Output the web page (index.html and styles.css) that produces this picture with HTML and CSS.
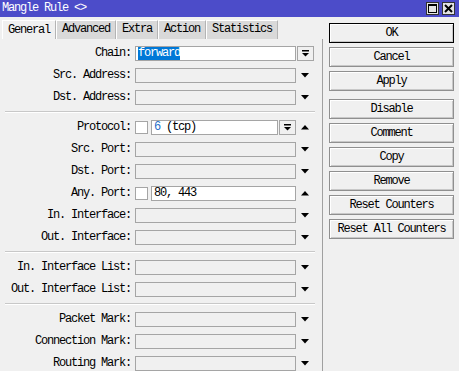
FILE: index.html
```html
<!DOCTYPE html>
<html lang="en">
<head>
    <meta charset="UTF-8">
    <title>Mangle Rule</title>
    <link rel="stylesheet" href="styles.css">
</head>
<body>
<div class="titlebar">
    <span class="title">Mangle Rule &lt;&gt;</span>
    <div class="wbtns">
        <div class="wbtn"><svg width="9" height="9" viewBox="0 0 9 9"><rect x="0.5" y="0.5" width="8" height="8" fill="none" stroke="#000"/><rect x="0" y="0" width="9" height="2" fill="#000"/></svg></div>
        <div class="wbtn"><svg width="9" height="9" viewBox="0 0 9 9"><path d="M1 1L8 8M8 1L1 8" stroke="#000" stroke-width="2"/></svg></div>
    </div>
</div>

<div class="main">
    <div class="left">
        <div class="tabs">
            <div class="tab active">General</div>
            <div class="tab">Advanced</div>
            <div class="tab">Extra</div>
            <div class="tab">Action</div>
            <div class="tab">Statistics</div>
        </div>
        <div class="panel">
            <div class="row">
                <div class="label">Chain:</div>
                <div class="field">
                    <div class="input white"><span class="sel">forward</span></div>
                </div>
                <div class="ctl"><div class="dropbtn"><svg width="7" height="7" viewBox="0 0 7 7"><rect x="0" y="0" width="7" height="1.5" fill="#000"/><polygon points="0,3 7,3 3.5,6.5" fill="#000"/></svg></div></div>
            </div>
            <div class="row">
                <div class="label">Src. Address:</div>
                <div class="field"><div class="input"></div></div>
                <div class="ctl"><svg class="arrow" width="8" height="5" viewBox="0 0 8 5"><polygon points="0,0 8,0 4,4.5" fill="#000"/></svg></div>
            </div>
            <div class="row">
                <div class="label">Dst. Address:</div>
                <div class="field"><div class="input"></div></div>
                <div class="ctl"><svg class="arrow" width="8" height="5" viewBox="0 0 8 5"><polygon points="0,0 8,0 4,4.5" fill="#000"/></svg></div>
            </div>

            <div class="sep"></div>

            <div class="row">
                <div class="label">Protocol:</div>
                <div class="field">
                    <div class="check"></div>
                    <div class="input white"><span class="num">6</span>&nbsp;(tcp)</div>
                    <div class="dropbtn"><svg width="7" height="7" viewBox="0 0 7 7"><rect x="0" y="0" width="7" height="1.5" fill="#000"/><polygon points="0,3 7,3 3.5,6.5" fill="#000"/></svg></div>
                </div>
                <div class="ctl"><svg class="arrow" width="8" height="5" viewBox="0 0 8 5"><polygon points="0,4.5 8,4.5 4,0" fill="#000"/></svg></div>
            </div>
            <div class="row">
                <div class="label">Src. Port:</div>
                <div class="field"><div class="input"></div></div>
                <div class="ctl"><svg class="arrow" width="8" height="5" viewBox="0 0 8 5"><polygon points="0,0 8,0 4,4.5" fill="#000"/></svg></div>
            </div>
            <div class="row">
                <div class="label">Dst. Port:</div>
                <div class="field"><div class="input"></div></div>
                <div class="ctl"><svg class="arrow" width="8" height="5" viewBox="0 0 8 5"><polygon points="0,0 8,0 4,4.5" fill="#000"/></svg></div>
            </div>
            <div class="row">
                <div class="label">Any. Port:</div>
                <div class="field">
                    <div class="check"></div>
                    <div class="input white">80, 443</div>
                </div>
                <div class="ctl"><svg class="arrow" width="8" height="5" viewBox="0 0 8 5"><polygon points="0,4.5 8,4.5 4,0" fill="#000"/></svg></div>
            </div>
            <div class="row">
                <div class="label">In. Interface:</div>
                <div class="field"><div class="input"></div></div>
                <div class="ctl"><svg class="arrow" width="8" height="5" viewBox="0 0 8 5"><polygon points="0,0 8,0 4,4.5" fill="#000"/></svg></div>
            </div>
            <div class="row">
                <div class="label">Out. Interface:</div>
                <div class="field"><div class="input"></div></div>
                <div class="ctl"><svg class="arrow" width="8" height="5" viewBox="0 0 8 5"><polygon points="0,0 8,0 4,4.5" fill="#000"/></svg></div>
            </div>

            <div class="sep"></div>

            <div class="row">
                <div class="label">In. Interface List:</div>
                <div class="field"><div class="input"></div></div>
                <div class="ctl"><svg class="arrow" width="8" height="5" viewBox="0 0 8 5"><polygon points="0,0 8,0 4,4.5" fill="#000"/></svg></div>
            </div>
            <div class="row">
                <div class="label">Out. Interface List:</div>
                <div class="field"><div class="input"></div></div>
                <div class="ctl"><svg class="arrow" width="8" height="5" viewBox="0 0 8 5"><polygon points="0,0 8,0 4,4.5" fill="#000"/></svg></div>
            </div>

            <div class="sep"></div>

            <div class="row">
                <div class="label">Packet Mark:</div>
                <div class="field"><div class="input"></div></div>
                <div class="ctl"><svg class="arrow" width="8" height="5" viewBox="0 0 8 5"><polygon points="0,0 8,0 4,4.5" fill="#000"/></svg></div>
            </div>
            <div class="row">
                <div class="label">Connection Mark:</div>
                <div class="field"><div class="input"></div></div>
                <div class="ctl"><svg class="arrow" width="8" height="5" viewBox="0 0 8 5"><polygon points="0,0 8,0 4,4.5" fill="#000"/></svg></div>
            </div>
            <div class="row">
                <div class="label">Routing Mark:</div>
                <div class="field"><div class="input"></div></div>
                <div class="ctl"><svg class="arrow" width="8" height="5" viewBox="0 0 8 5"><polygon points="0,0 8,0 4,4.5" fill="#000"/></svg></div>
            </div>
        </div>
    </div>

    <div class="actions">
        <div class="btn default">OK</div>
        <div class="btn">Cancel</div>
        <div class="btn">Apply</div>
        <div class="btn spaced">Disable</div>
        <div class="btn">Comment</div>
        <div class="btn">Copy</div>
        <div class="btn">Remove</div>
        <div class="btn">Reset Counters</div>
        <div class="btn">Reset All Counters</div>
    </div>
</div>
</body>
</html>
```

FILE: styles.css
```css
body {
    margin: 0;
    width: 459px;
    height: 371px;
    overflow: hidden;
    background: #f0f0f0;
    color: #000;
    font-family: "Liberation Mono", monospace;
    font-size: 12px;
    letter-spacing: -1.2px;
}
.titlebar {
    height: 17px;
    background: #4c4cc9;
    color: #fff;
    display: flex;
    align-items: center;
    justify-content: space-between;
    padding: 0 4px 0 2px;
}
.title {
    line-height: 17px;
}
.wbtns {
    display: flex;
    gap: 3px;
}
.wbtn {
    width: 11px;
    height: 11px;
    background: #e4e4e4;
    border: 1px solid #333;
    display: flex;
    align-items: center;
    justify-content: center;
}
.main {
    display: flex;
    align-items: flex-start;
}
.left {
    margin-left: 2px;
    width: 321px;
}
.tabs {
    display: flex;
    margin-top: 3px;
    height: 19px;
}
.tab {
    padding: 0 5px;
    line-height: 17px;
    background: #d9d9d9;
    border: 1px solid #fff;
    border-right-color: #b4b4b4;
    border-bottom: none;
}
.tab.active {
    background: #f0f0f0;
    line-height: 18px;
}
.panel {
    height: 332px;
    padding-top: 3px;
    border-right: 1px solid #a0a0a0;
    box-sizing: border-box;
}
.row {
    display: flex;
    align-items: center;
    height: 22px;
}
.label {
    width: 129px;
    margin-right: 4px;
    text-align: right;
    white-space: nowrap;
}
.field {
    width: 161px;
    display: flex;
    align-items: center;
}
.input {
    flex: 1;
    height: 13px;
    border: 1px solid #a5a5a5;
    line-height: 13px;
    padding-left: 2px;
    white-space: nowrap;
    overflow: hidden;
}
.input.white {
    background: #fff;
}
.sel {
    background: #0078d7;
    color: #fff;
}
.num {
    color: #2a6fc9;
}
.check {
    width: 11px;
    height: 11px;
    border: 1px solid #a5a5a5;
    background: #fff;
    margin-right: 3px;
}
.dropbtn {
    width: 15px;
    height: 13px;
    border: 1px solid #a5a5a5;
    background: #f0f0f0;
    margin-left: 1px;
    display: flex;
    align-items: center;
    justify-content: center;
}
.ctl {
    width: 18px;
    display: flex;
    justify-content: center;
}
.ctl .dropbtn {
    margin-left: 1px;
}
.sep {
    margin: 3px 7px 3px 3px;
    border-top: 1px solid #c8c8c8;
    border-bottom: 1px solid #fff;
}
.actions {
    margin-left: 6px;
    padding-top: 6px;
    width: 125px;
    display: flex;
    flex-direction: column;
    gap: 4px;
}
.btn {
    height: 18px;
    line-height: 18px;
    text-align: center;
    background: #f0f0f0;
    border: 1px solid #8f8f8f;
    box-shadow: inset 1px 1px 0 #fff, inset -1px -1px 0 #c8c8c8;
    white-space: nowrap;
}
.btn.default {
    border-color: #000;
}
.btn.spaced {
    margin-top: 4px;
}
```
